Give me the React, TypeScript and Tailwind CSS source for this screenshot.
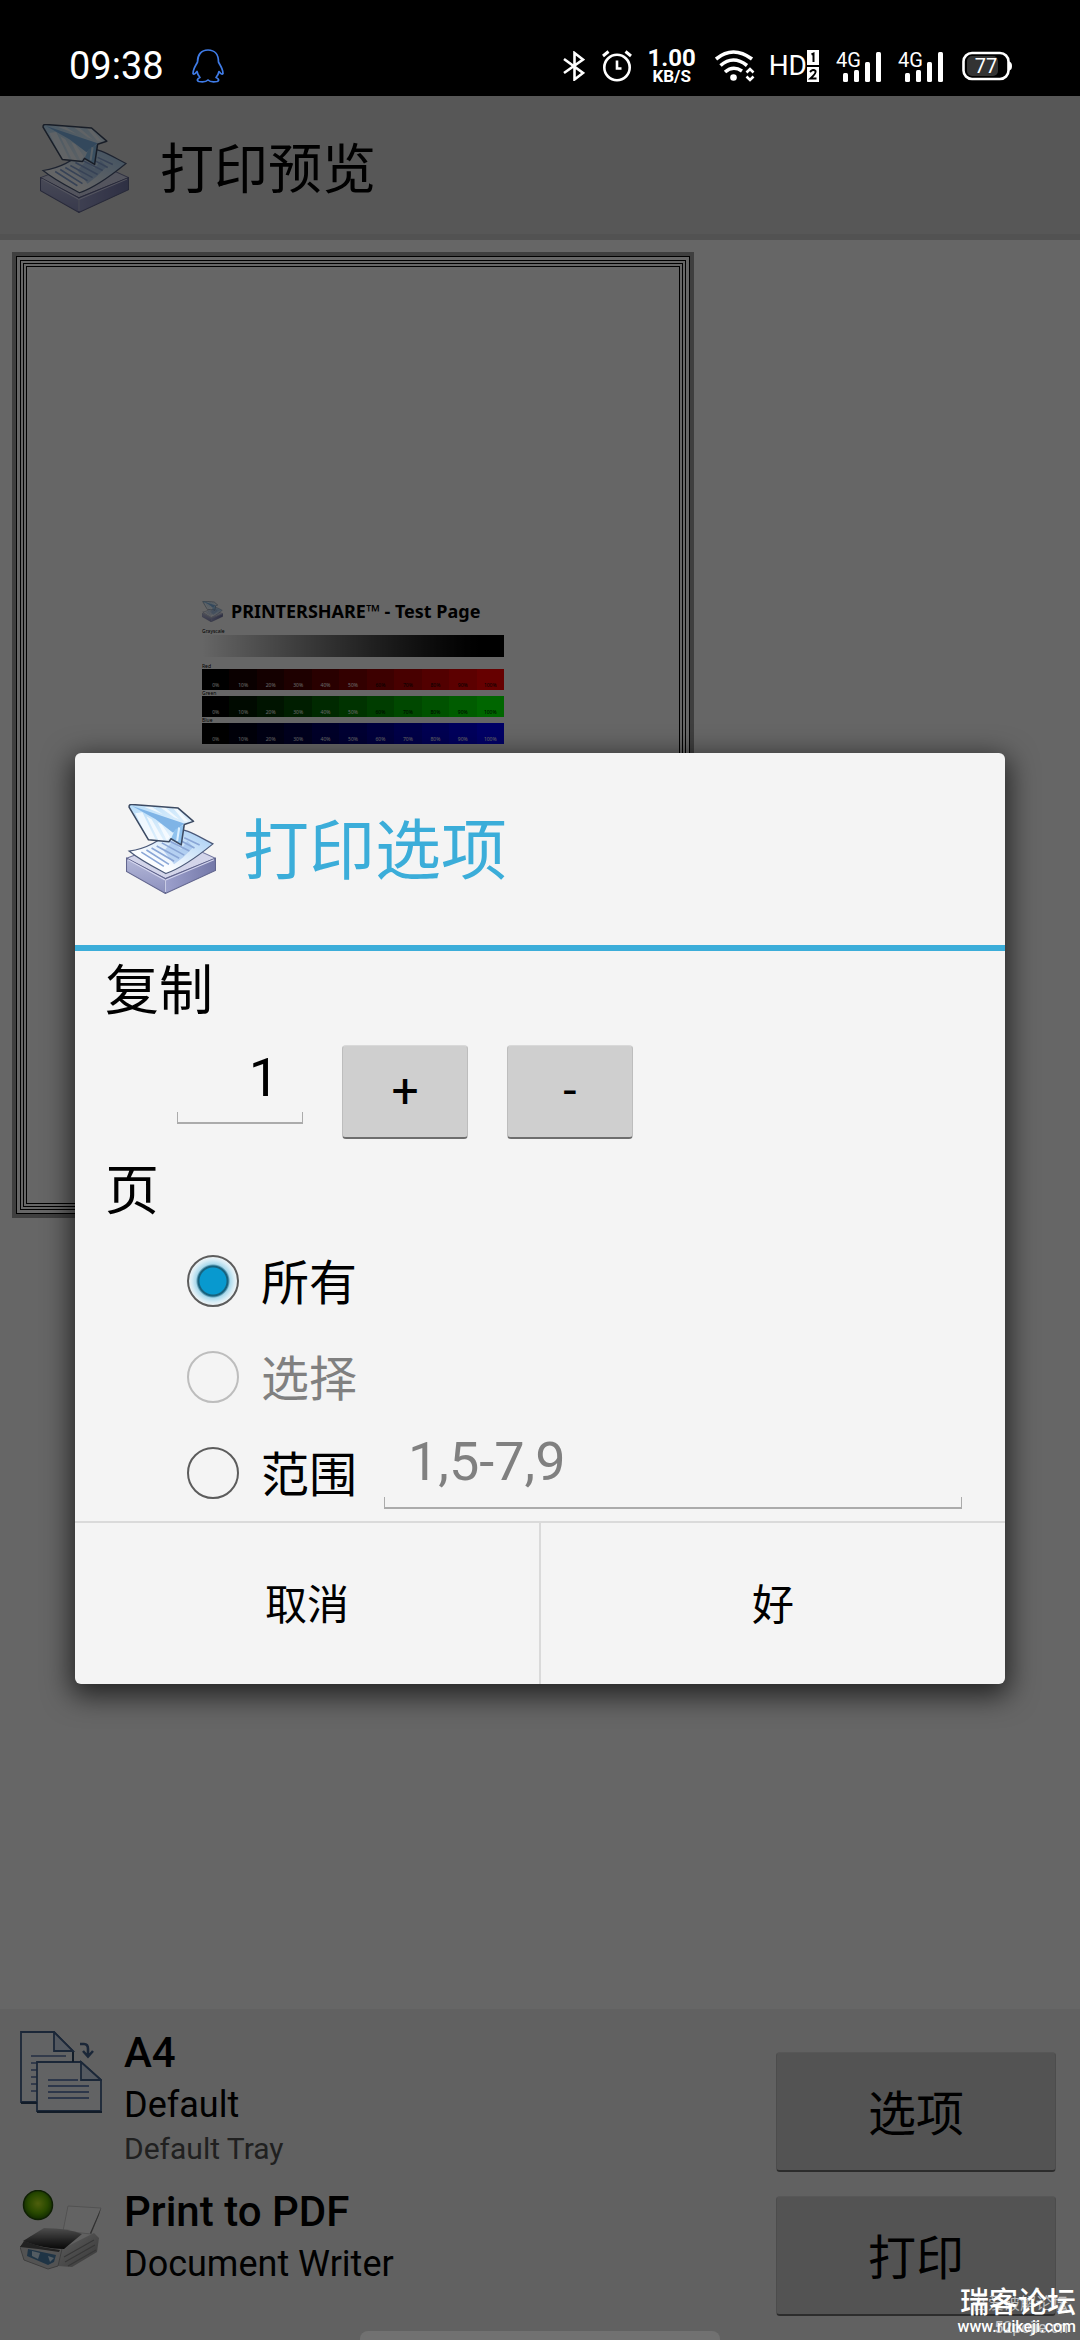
import { useState } from "react";

function AppLogo({ className }: { className: string }) {
  return (
    <svg viewBox="0 0 88 88" className={className} aria-hidden="true">
      <defs>
        <linearGradient id="trayLeft" x1="0" y1="0" x2="0" y2="1">
          <stop offset="0" stopColor="#b4b8d8" />
          <stop offset="1" stopColor="#8c90be" />
        </linearGradient>
        <linearGradient id="trayRight" x1="0" y1="0" x2="1" y2="0">
          <stop offset="0" stopColor="#9ca0cc" />
          <stop offset="1" stopColor="#7478a8" />
        </linearGradient>
        <linearGradient id="sheet" x1="0" y1="1" x2="1" y2="0">
          <stop offset="0.3" stopColor="#fbfdff" />
          <stop offset="1" stopColor="#9cc8f2" />
        </linearGradient>
        <linearGradient id="wing" x1="0" y1="0" x2="1" y2="1">
          <stop offset="0" stopColor="#b8dcf8" />
          <stop offset="1" stopColor="#f0f9ff" />
        </linearGradient>
      </defs>
      <path d="M0.5 53 48 35 87.500 53 38.500 73z" fill="#d3d5ea" stroke="#7478a0" />
      <path d="M0.500 53 38.500 73V87.500L0.500 66z" fill="url(#trayLeft)" stroke="#62668e" />
      <path d="M87.500 53 38.500 73V87.500L87.500 65z" fill="url(#trayRight)" stroke="#62668e" />
      <path d="M2 54.500 38.500 74.500 86 54.500M38.500 74V86" fill="none" stroke="#d6d8f0" />
      <path d="M3 46C17 44 33 37 45 24 58 23 71 32 85 39 74 48 56 62 39 68 26 61 14 55 3 46z" fill="url(#sheet)" stroke="#4a5878" strokeWidth="1.200" />
      <path d="M37 46 45 37 54 44 60 36 66 42 56 52 47 59z" fill="#92b8ea" opacity="0.550" />
      <path d="M15 47 37 61M20 45 42 59M25 43 47 56M30 41 52 53M35 38 57 50M40 35 62 46M50 34 67 43M57 33 72 40" stroke="#8aa6d6" strokeWidth="1.600" />
      <path d="M3 3Q3 0 6 0.500L51 4 66 17 57 20 54 40 44 34 42 37 22 35z" fill="url(#wing)" />
      <path d="M9 9 16 8 29 35 22 35zM20 12 25 15 37 36 32 36zM31 18 35 20 43 32 40 36z" fill="#fff" opacity="0.700" />
      <path d="M18 3 24 2 36 10 31 8zM33 3 38 3 52 15 47 13zM46 4 50 4 61 17 57 17z" fill="#fff" opacity="0.700" />
      <path d="M6 2 57 19 46 28 29 15z" fill="#7fb4e6" />
      <path d="M57 20 54 40 44 34 48 25z" fill="#8fc2ee" />
      <path d="M52 23 50 36" stroke="#dcf0ff" strokeWidth="2" />
      <path d="M3 3Q3 0 6 0.500L51 4 66 17 57 20 54 40 44 34 42 37 22 35z" fill="none" stroke="#3c4a62" strokeWidth="1.500" strokeLinejoin="round" />
    </svg>
  );
}

function Signal() {
  return (
    <svg viewBox="0 -5 46 40" className="h-10 w-[46px]" role="img" aria-label="4G">
      <text x="0" y="16" fontSize="20" fill="#fff" fontFamily="Roboto, sans-serif">4G</text>
      <g fill="#fff">
        <rect x="7" y="22" width="5" height="9" rx="1.500" />
        <rect x="18" y="19" width="5" height="12" rx="1.500" />
        <rect x="29" y="11" width="5" height="20" rx="1.500" />
        <rect x="40" y="1" width="5" height="30" rx="1.500" />
      </g>
    </svg>
  );
}

function StatusBar() {
  return (
    <div className="relative z-20 flex h-24 items-center bg-black pt-9 pr-[68px] pl-[69px] text-white">
      <span className="text-[38px] leading-[44px]">09:38</span>
      <svg viewBox="0 0 32 34" className="ml-7 h-[34px] w-8" fill="none" stroke="#3f7be6" strokeWidth="1.700" strokeLinejoin="round" aria-hidden="true">
        <path d="M16 1C9 1 5.500 6 5.500 13 3.500 17 1 20 1 24.500 2 26 4 24 5 22.500 5.500 25 6.500 27 8 28.500 5 29.500 4.500 32 7 32.500 10 33 14 33 16 31 18 33 22 33 25 32.500 27.500 32 27 29.500 24 28.500 25.500 27 26.500 25 27 22.500 28 24 30 26 31 24.500 31 20 28.500 17 26.500 13 26.500 6 23 1 16 1z" />
      </svg>
      <div className="ml-auto flex items-center">
        <svg viewBox="0 0 22 30" className="h-[30px] w-[22px]" fill="none" stroke="#fff" strokeWidth="2.600" aria-hidden="true">
          <path d="M1 8 20 22 11.500 28.500V2L20 8.500 1 22" />
        </svg>
        <svg viewBox="0 0 30 32" className="ml-[17px] h-8 w-[30px]" fill="none" stroke="#fff" strokeWidth="2.600" aria-hidden="true">
          <circle cx="15" cy="17.500" r="12.700" />
          <path d="M15 10.500V18.500H19.500" />
          <path d="M1 6 6.500 1.500M29 6 23.500 1.500" strokeWidth="3" />
        </svg>
        <div className="ml-3.5 flex w-[52px] flex-col items-center font-bold">
          <span className="text-[24px] leading-5">1.00</span>
          <span className="text-[17px] leading-4">KB/S</span>
        </div>
        <svg viewBox="0 0 40 32" className="ml-[17px] h-8 w-10" fill="none" stroke="#fff" strokeWidth="3.600" aria-hidden="true">
          <path d="M1 9Q18-5 37 9M5.500 15.500Q18 4.500 32 15.500M10 22Q18 15 27 21" />
          <circle cx="18.500" cy="27.500" r="3.300" fill="#fff" stroke="none" />
          <path d="M31.500 22.500 35 19 38.500 22.500M31.500 26.500 35 30 38.500 26.500" strokeWidth="2.600" />
        </svg>
        <div className="ml-3.5 flex items-center">
          <span className="text-[28px] leading-8">HD</span>
          <svg viewBox="0 0 12 32" className="h-8 w-3" aria-hidden="true">
            <path d="M0 0H12V15H0zM0 17H12V32H0z" fill="#fff" />
            <path d="M4.500 4.500 6.500 3.500V12" fill="none" stroke="#000" strokeWidth="2" />
            <path d="M3 22Q6 18.500 8.500 21 9.500 23 3.500 28.500H9.500" fill="none" stroke="#000" strokeWidth="2" />
          </svg>
        </div>
        <div className="ml-[17px] flex gap-4">
          <Signal />
          <Signal />
        </div>
        <svg viewBox="0 0 50 30" className="ml-[18px] h-[30px] w-[50px]" role="img" aria-label="77%">
          <rect x="5" y="5" width="31" height="20" rx="5" fill="#333" />
          <rect x="1.500" y="2" width="45" height="26" rx="8.500" fill="none" stroke="#fff" strokeWidth="2.600" />
          <path d="M47 10.500Q50 11 50 15T47 19.500z" fill="#fff" />
          <text x="24" y="22" fontSize="20" textAnchor="middle" fill="#fff" fontFamily="Roboto, sans-serif">77</text>
        </svg>
      </div>
    </div>
  );
}

const STEPS = [0, 10, 20, 30, 40, 50, 60, 70, 80, 90, 100];

function ColourBar({ label, channel, lightUntil }: { label: string; channel: number; lightUntil: number }) {
  return (
    <div>
      <div className="text-[5px] leading-[6px]">{label}</div>
      <div className="flex h-[21px]">
        {STEPS.map((step) => {
          const rgb = [0, 0, 0];
          rgb[channel] = Math.round(step * 2.55);
          return (
            <span
              key={step}
              className={`flex-1 pt-3 text-center text-[5px] leading-[8px] ${step <= lightUntil ? "text-white" : "text-black"}`}
              style={{ backgroundColor: `rgb(${rgb.join(",")})` }}
            >
              {step}%
            </span>
          );
        })}
      </div>
    </div>
  );
}

function PagePreview() {
  return (
    <div className="mt-3 ml-3 h-[966px] w-[682px] border-4 border-[#9e9e9e]">
      <div className="h-full border border-black p-[3px]">
        <div className="h-full border border-black p-0.5">
          <div className="h-full border border-black p-0.5">
            <div className="h-full border border-black px-[175px] pt-[332px] font-['Noto_Sans',sans-serif] text-black">
              <div className="flex items-center gap-2">
                <AppLogo className="h-[21px] w-[21px]" />
                <span className="text-[18px] leading-6 font-bold whitespace-nowrap">PRINTERSHARE™ - Test Page</span>
              </div>
              <div className="mt-1 text-[5px] leading-[8px]">Grayscale</div>
              <div className="mb-[6px] h-[22px] bg-linear-to-r from-white to-black" />
              <ColourBar label="Red" channel={0} lightUntil={50} />
              <ColourBar label="Green" channel={1} lightUntil={50} />
              <ColourBar label="Blue" channel={2} lightUntil={100} />
            </div>
          </div>
        </div>
      </div>
    </div>
  );
}

function PaperIcon() {
  return (
    <svg viewBox="0 0 82 82" className="h-[82px] w-[82px] shrink-0" aria-hidden="true">
      <g strokeWidth="1.800" stroke="#45628c">
        <path d="M1 1H34L53 20V71H1z" fill="#f6f7fb" />
        <path d="M34 1V20H53z" fill="#d3def0" />
        <path d="M11 25H46M11 32H40M11 39H40M11 46H40M11 53H40M11 60H40" stroke="#7f93bb" />
        <path d="M17 31H61L81 49V80H17z" fill="#f6f7fb" />
        <path d="M61 31V49H81z" fill="#d3def0" />
        <path d="M28 49H58M28 55H69M28 61H69M28 67H69" stroke="#7189b8" />
        <path d="M53 21V31M1 72H17M17 81H82" strokeWidth="2" stroke="#2f4664" />
        <path d="M60 13H64Q68 13 68 18V24M63 20 68 25.500 73 20" fill="none" strokeWidth="2.600" />
      </g>
    </svg>
  );
}

function PrinterIcon() {
  return (
    <svg viewBox="0 0 82 82" className="h-[82px] w-[82px] shrink-0" aria-hidden="true">
      <defs>
        <radialGradient id="led" cx="0.500" cy="0.450" r="0.550">
          <stop offset="0" stopColor="#c4ee20" />
          <stop offset="0.600" stopColor="#67b800" />
          <stop offset="1" stopColor="#2c6c00" />
        </radialGradient>
        <linearGradient id="lid" x1="0" y1="0" x2="0" y2="1">
          <stop offset="0" stopColor="#c2c2c2" />
          <stop offset="0.600" stopColor="#555" />
          <stop offset="1" stopColor="#161616" />
        </linearGradient>
        <linearGradient id="side" x1="0" y1="0" x2="1" y2="1">
          <stop offset="0" stopColor="#eee" />
          <stop offset="1" stopColor="#888" />
        </linearGradient>
      </defs>
      <path d="M48 16 81 18 71 44 43 41z" fill="#f8f8f8" stroke="#ccc" />
      <path d="M81 18 79 25 71 44 70 43z" fill="#777" />
      <path d="M40 60 74 43 79 48 77 62 52 77 38 76z" fill="url(#side)" />
      <path d="M44 67 74 50M45 72 75 55M48 76 76 60" stroke="#888" strokeWidth="1.200" />
      <path d="M0 57 10 47 42 59 38 76 28 79 4 70z" fill="#d0d0d0" stroke="#999" />
      <path d="M8 59 36 65 34 72 28 75 7 66z" fill="#4f83ad" />
      <path d="M12 61 20 63 18 69 12 66zM28 66 34 68 30 72z" fill="#cfe6f5" />
      <path d="M3 51 24 38Q48 38 62 44L44 59Q24 59 3 51z" fill="url(#lid)" />
      <path d="M0 57 4 51 22 57 40 60 39 62 18 59z" fill="#555" />
      <circle cx="18" cy="15" r="14.500" fill="url(#led)" stroke="#244e08" strokeWidth="1.500" />
    </svg>
  );
}

const raised =
  "rounded-[4px] border-x border-t border-b-2 border-x-[#bdbdbd] border-t-[#d9d9d9] border-b-[#6e6e6e] bg-[#cfcfcf] text-black";

function BottomPanel() {
  return (
    <footer className="flex items-start justify-between bg-[#f2f2f2] pt-4 pr-6 pb-6 pl-5">
      <div className="flex flex-col gap-[15px]">
        <div className="flex gap-[22px]">
          <div className="pt-1.5">
            <PaperIcon />
          </div>
          <div>
            <div className="text-[42px] leading-[56px] font-medium">A4</div>
            <div className="text-[36px] leading-[48px]">Default</div>
            <div className="text-[30px] leading-[40px] text-[#505050]">Default Tray</div>
          </div>
        </div>
        <div className="flex gap-[22px]">
          <div className="pt-1.5">
            <PrinterIcon />
          </div>
          <div>
            <div className="text-[42px] leading-[56px] font-medium">Print to PDF</div>
            <div className="text-[36px] leading-[48px]">Document Writer</div>
          </div>
        </div>
      </div>
      <div className="flex w-[280px] flex-col gap-6 pt-[27px]">
        <button type="button" className={`h-[120px] pt-1.5 text-[48px] ${raised}`}>选项</button>
        <button type="button" className={`h-[120px] pt-1.5 text-[48px] ${raised}`}>打印</button>
      </div>
    </footer>
  );
}

const underline =
  "relative after:pointer-events-none after:absolute after:inset-x-0 after:bottom-0 after:h-3 after:border-x after:border-b-2 after:border-[#ababab] after:content-['']";

function PrintDialog() {
  const [copies, setCopies] = useState(1);
  const [pages, setPages] = useState("all");
  const [range, setRange] = useState("");
  const options = [
    { id: "all", label: "所有", disabled: false },
    { id: "selection", label: "选择", disabled: true },
    { id: "range", label: "范围", disabled: false },
  ];
  return (
    <div
      role="dialog"
      aria-labelledby="dialog-title"
      className="w-full rounded-[6px] bg-[#f4f4f4] shadow-[0_8px_28px_4px_rgba(0,0,0,0.65)]"
    >
      <div className="flex h-[198px] items-center gap-[27px] border-b-6 border-[#3badd9] pl-[51px]">
        <AppLogo className="h-[90px] w-[90px]" />
        <h2 id="dialog-title" className="pt-1.5 text-[66px] leading-[88px] text-[#3badd9]">打印选项</h2>
      </div>
      <label htmlFor="copies" className="block pt-1 pl-[30px] text-[54px] leading-[74px]">复制</label>
      <div className="mt-4 flex items-start pl-[102px]">
        <div className={`w-[126px] pb-[13px] ${underline}`}>
          <input
            id="copies"
            inputMode="numeric"
            value={copies}
            onChange={(e) => setCopies(Number(e.target.value) || 1)}
            className="block h-[66px] w-full bg-transparent pr-6 text-right text-[54px] outline-none"
          />
        </div>
        <button type="button" onClick={() => setCopies(copies + 1)} className={`ml-[39px] h-[94px] w-[126px] text-[48px] ${raised}`}>+</button>
        <button type="button" onClick={() => setCopies(Math.max(1, copies - 1))} className={`ml-[39px] h-[94px] w-[126px] text-[48px] ${raised}`}>-</button>
      </div>
      <fieldset className="pt-4">
        <legend className="float-left w-full pl-[30px] text-[54px] leading-[74px]">页</legend>
        <div className="clear-both pt-1 pr-[43px] pl-28">
          {options.map((o) => (
            <div key={o.id} className="flex h-24 items-center">
              <label className="flex shrink-0 items-center gap-[22px] text-[48px] leading-[64px] has-disabled:text-[#808080]">
                <input
                  type="radio"
                  name="pages"
                  disabled={o.disabled}
                  checked={pages === o.id}
                  onChange={() => setPages(o.id)}
                  className="h-[52px] w-[52px] appearance-none rounded-full border-2 border-[#5c5c5c] checked:bg-[radial-gradient(circle,#0899cf_13px,#17627e_14px,#17627e_15px,#a9d9ec_17px,#d6ecf5_21px,#eef3f5_24px)] disabled:border-[#bdbdbd]"
                />
                <span className="pt-1.5">{o.label}</span>
              </label>
              {o.id === "range" && (
                <div className={`mb-3 ml-[27px] flex-1 self-stretch pb-2.5 ${underline}`}>
                  <input
                    aria-label="范围"
                    value={range}
                    onChange={(e) => setRange(e.target.value)}
                    placeholder="1,5-7,9"
                    className="block h-[74px] w-full bg-transparent pl-6 text-[54px] outline-none placeholder:text-[#808080]"
                  />
                </div>
              )}
            </div>
          ))}
        </div>
      </fieldset>
      <div className="flex h-[163px] divide-x-2 divide-[#dadada] border-t-2 border-[#dadada] text-[42px]">
        <button type="button" className="flex-1 pt-1">取消</button>
        <button type="button" className="flex-1 pt-1">好</button>
      </div>
    </div>
  );
}

export default function App() {
  return (
    <div className="relative flex min-h-screen flex-col overflow-hidden bg-white font-['Roboto','Noto_Sans_CJK_SC',sans-serif] text-black">
      <StatusBar />
      <header className="flex h-36 items-center gap-[31px] border-b-6 border-[#cdcdcd] bg-[#dadada] pt-1.5 pl-10">
        <AppLogo className="h-[89px] w-[89px]" />
        <h1 className="pt-1.5 text-[54px] leading-[72px]">打印预览</h1>
      </header>
      <main className="flex-1">
        <PagePreview />
      </main>
      <BottomPanel />
      <div className="absolute inset-0 z-10 flex items-center bg-black/60 px-[75px] pt-24">
        <PrintDialog />
      </div>
      <div className="absolute inset-x-1/3 bottom-0 z-20 h-[9px] rounded-t-lg bg-[#717171]" />
      <div className="absolute right-1 bottom-1 z-20 text-right whitespace-nowrap text-white">
        <div className="absolute top-1.5 right-2 text-[16px] leading-5 opacity-60">
          <div>吾爱破解论坛</div>
          <div className="pt-1">52pojie.cn</div>
        </div>
        <div className="relative text-[29px] leading-[30px] font-medium">瑞客论坛</div>
        <div className="relative text-[16px] leading-[18px] font-medium">www.ruikeji.com</div>
      </div>
    </div>
  );
}
